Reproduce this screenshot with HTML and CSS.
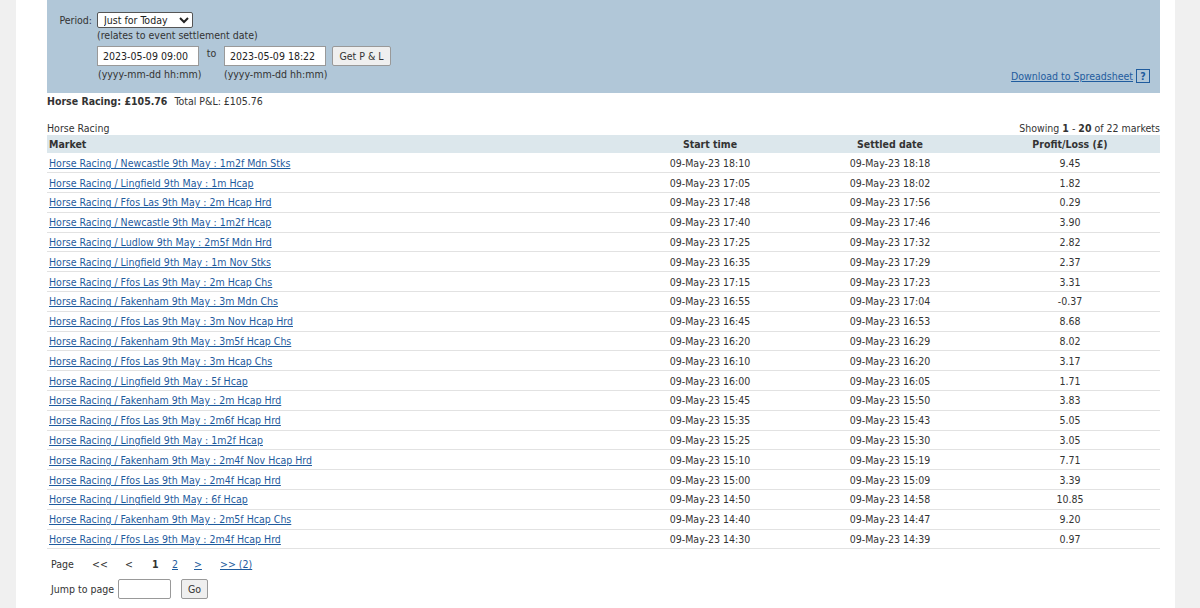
FILE: index.html
```html
<!DOCTYPE html>
<html lang="en">
<head>
  <meta charset="UTF-8" />
  <title>Profit and Loss</title>
  <link rel="stylesheet" href="styles.css">
</head>
<body>
  <div class="page">
    <div class="filter-panel">
      <form class="filter-form">
        <div class="form-row">
          <label class="form-label" for="period">Period:</label>
          <select id="period" class="period-select">
            <option>Just for Today</option>
          </select>
        </div>
        <div class="form-row">
          <span class="form-label"></span>
          <span class="note">(relates to event settlement date)</span>
        </div>
        <div class="form-row date-row">
          <span class="form-label"></span>
          <input type="text" class="date-input" value="2023-05-09 09:00">
          <span class="to-text">to</span>
          <input type="text" class="date-input" value="2023-05-09 18:22">
          <button type="button" class="btn get-btn">Get P &amp; L</button>
        </div>
        <div class="form-row hint-row">
          <span class="form-label"></span>
          <span class="hint">(yyyy-mm-dd hh:mm)</span>
          <span class="hint">(yyyy-mm-dd hh:mm)</span>
        </div>
      </form>
      <div class="download">
        <a href="#">Download to Spreadsheet</a>
        <span class="help-box">?</span>
      </div>
    </div>

    <div class="totals">
      <strong>Horse Racing: £105.76</strong>
      <span class="total-pl">Total P&amp;L: £105.76</span>
    </div>

    <div class="caption-row">
      <span>Horse Racing</span>
      <span>Showing <b>1</b> - <b>20</b> of 22 markets</span>
    </div>

    <table class="markets">
      <thead>
        <tr>
          <th class="col-market">Market</th>
          <th>Start time</th>
          <th>Settled date</th>
          <th>Profit/Loss (£)</th>
        </tr>
      </thead>
      <tbody>
        <tr><td><a href="#">Horse Racing / Newcastle 9th May : 1m2f Mdn Stks</a></td><td>09-May-23 18:10</td><td>09-May-23 18:18</td><td>9.45</td></tr>
        <tr><td><a href="#">Horse Racing / Lingfield 9th May : 1m Hcap</a></td><td>09-May-23 17:05</td><td>09-May-23 18:02</td><td>1.82</td></tr>
        <tr><td><a href="#">Horse Racing / Ffos Las 9th May : 2m Hcap Hrd</a></td><td>09-May-23 17:48</td><td>09-May-23 17:56</td><td>0.29</td></tr>
        <tr><td><a href="#">Horse Racing / Newcastle 9th May : 1m2f Hcap</a></td><td>09-May-23 17:40</td><td>09-May-23 17:46</td><td>3.90</td></tr>
        <tr><td><a href="#">Horse Racing / Ludlow 9th May : 2m5f Mdn Hrd</a></td><td>09-May-23 17:25</td><td>09-May-23 17:32</td><td>2.82</td></tr>
        <tr><td><a href="#">Horse Racing / Lingfield 9th May : 1m Nov Stks</a></td><td>09-May-23 16:35</td><td>09-May-23 17:29</td><td>2.37</td></tr>
        <tr><td><a href="#">Horse Racing / Ffos Las 9th May : 2m Hcap Chs</a></td><td>09-May-23 17:15</td><td>09-May-23 17:23</td><td>3.31</td></tr>
        <tr><td><a href="#">Horse Racing / Fakenham 9th May : 3m Mdn Chs</a></td><td>09-May-23 16:55</td><td>09-May-23 17:04</td><td>-0.37</td></tr>
        <tr><td><a href="#">Horse Racing / Ffos Las 9th May : 3m Nov Hcap Hrd</a></td><td>09-May-23 16:45</td><td>09-May-23 16:53</td><td>8.68</td></tr>
        <tr><td><a href="#">Horse Racing / Fakenham 9th May : 3m5f Hcap Chs</a></td><td>09-May-23 16:20</td><td>09-May-23 16:29</td><td>8.02</td></tr>
        <tr><td><a href="#">Horse Racing / Ffos Las 9th May : 3m Hcap Chs</a></td><td>09-May-23 16:10</td><td>09-May-23 16:20</td><td>3.17</td></tr>
        <tr><td><a href="#">Horse Racing / Lingfield 9th May : 5f Hcap</a></td><td>09-May-23 16:00</td><td>09-May-23 16:05</td><td>1.71</td></tr>
        <tr><td><a href="#">Horse Racing / Fakenham 9th May : 2m Hcap Hrd</a></td><td>09-May-23 15:45</td><td>09-May-23 15:50</td><td>3.83</td></tr>
        <tr><td><a href="#">Horse Racing / Ffos Las 9th May : 2m6f Hcap Hrd</a></td><td>09-May-23 15:35</td><td>09-May-23 15:43</td><td>5.05</td></tr>
        <tr><td><a href="#">Horse Racing / Lingfield 9th May : 1m2f Hcap</a></td><td>09-May-23 15:25</td><td>09-May-23 15:30</td><td>3.05</td></tr>
        <tr><td><a href="#">Horse Racing / Fakenham 9th May : 2m4f Nov Hcap Hrd</a></td><td>09-May-23 15:10</td><td>09-May-23 15:19</td><td>7.71</td></tr>
        <tr><td><a href="#">Horse Racing / Ffos Las 9th May : 2m4f Hcap Hrd</a></td><td>09-May-23 15:00</td><td>09-May-23 15:09</td><td>3.39</td></tr>
        <tr><td><a href="#">Horse Racing / Lingfield 9th May : 6f Hcap</a></td><td>09-May-23 14:50</td><td>09-May-23 14:58</td><td>10.85</td></tr>
        <tr><td><a href="#">Horse Racing / Fakenham 9th May : 2m5f Hcap Chs</a></td><td>09-May-23 14:40</td><td>09-May-23 14:47</td><td>9.20</td></tr>
        <tr><td><a href="#">Horse Racing / Ffos Las 9th May : 2m4f Hcap Hrd</a></td><td>09-May-23 14:30</td><td>09-May-23 14:39</td><td>0.97</td></tr>
      </tbody>
    </table>

    <div class="pager">
      <span>Page</span>
      <span>&lt;&lt;</span>
      <span>&lt;</span>
      <b>1</b>
      <a href="#">2</a>
      <a href="#">&gt;</a>
      <a href="#">&gt;&gt; (2)</a>
    </div>

    <div class="jump-row">
      <span class="jump-label">Jump to page</span>
      <input type="text" class="jump-input">
      <button type="button" class="btn go-btn">Go</button>
    </div>
  </div>
</body>
</html>
```

FILE: styles.css
```css
:root {
  --panel-bg: #b1c7d8;
  --head-bg: #dce7ec;
  --link-color: #1f5c9e;
  --text-color: #333;
  --row-line: #e2e2e2;
  --side-bg: #f0f0f0;
}

* {
  box-sizing: border-box;
}

body {
  margin: 0;
  background-color: var(--side-bg);
  font-family: "DejaVu Sans Condensed", "DejaVu Sans", sans-serif;
  font-size: 10.5px;
  color: var(--text-color);
}

a {
  color: var(--link-color);
}

.page {
  margin-left: 16px;
  width: 1159px;
  min-height: 608px;
  background: white;
  padding: 0 15px 0 31px;
}

/* filter panel */
.filter-panel {
  display: flex;
  justify-content: space-between;
  height: 93px;
  background-color: var(--panel-bg);
  padding-top: 12px;
}

.form-row {
  display: flex;
  align-items: center;
}

.form-label {
  width: 50px;
  padding-right: 5px;
  text-align: right;
  flex-shrink: 0;
}

.period-select {
  width: 96px;
  height: 16px;
  font-family: inherit;
  font-size: 10.5px;
  color: #222;
  border: 1px solid #555;
  border-radius: 2px;
  background: white;
  padding: 0 2px;
}

.note {
  line-height: 14px;
}

.date-row {
  margin-top: 4px;
}

.date-input {
  width: 102px;
  height: 20px;
  border: 1px solid #999;
  font-family: inherit;
  font-size: 10.5px;
  color: #222;
  padding: 0 5px;
}

.to-text {
  width: 25px;
  text-align: center;
  align-self: flex-start;
  margin-top: 1px;
}

.btn {
  height: 20px;
  border: 1px solid #999;
  border-radius: 2px;
  background-color: #efefef;
  font-family: inherit;
  font-size: 10.5px;
  color: #333;
  padding: 0;
  white-space: nowrap;
}

.get-btn {
  width: 59px;
  margin-left: 6px;
}

.hint-row {
  margin-top: 1px;
  line-height: 14px;
}

.hint {
  width: 126px;
  padding-left: 1px;
}

.download {
  align-self: flex-end;
  display: flex;
  align-items: center;
  gap: 3px;
  margin-bottom: 10px;
  margin-right: 10px;
}

.help-box {
  width: 14px;
  height: 14px;
  border: 1px solid var(--link-color);
  color: var(--link-color);
  font-weight: bold;
  text-align: center;
  line-height: 12px;
}

/* totals and caption */
.totals {
  line-height: 17px;
}

.total-pl {
  margin-left: 4px;
}

.caption-row {
  display: flex;
  justify-content: space-between;
  margin-top: 11px;
  line-height: 14px;
}

/* market table */
.markets {
  width: 100%;
  border-collapse: collapse;
}

.markets th {
  background-color: var(--head-bg);
  height: 18px;
  padding: 0 2px;
  font-weight: bold;
  text-align: center;
  width: 180px;
}

.markets th.col-market {
  text-align: left;
  width: auto;
}

.markets td {
  height: 19.8px;
  padding: 0 2px;
  text-align: center;
  border-bottom: 1px solid var(--row-line);
}

.markets td:first-child {
  text-align: left;
}

/* paging */
.pager {
  display: grid;
  grid-template-columns: 41px 33px 27px 20px 22px 26px auto;
  justify-items: start;
  margin-top: 7px;
  padding-left: 4px;
  line-height: 16px;
}

.jump-row {
  display: flex;
  align-items: center;
  margin-top: 7px;
  padding-left: 4px;
}

.jump-label {
  width: 67px;
}

.jump-input {
  width: 53px;
  height: 20px;
  border: 1px solid #999;
  border-radius: 2px;
}

.go-btn {
  width: 27px;
  margin-left: 10px;
}
```
